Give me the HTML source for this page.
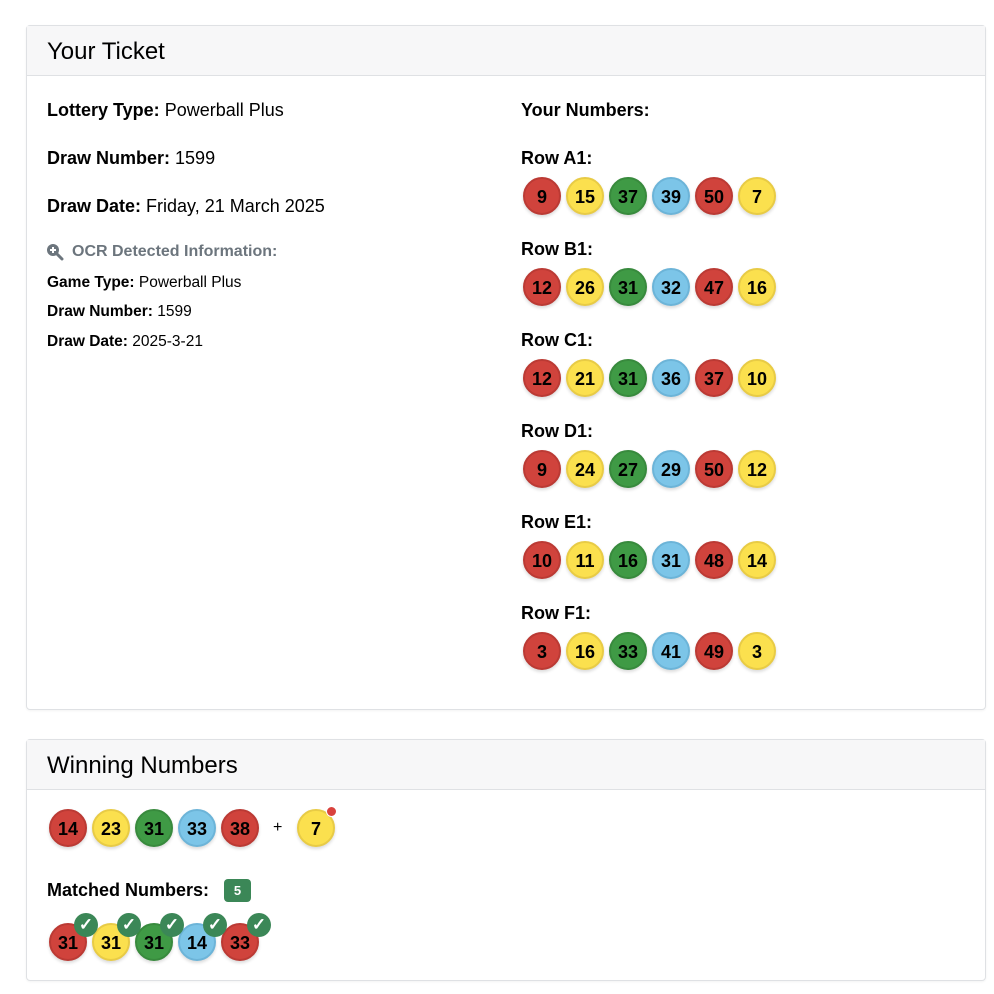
<!DOCTYPE html>
<html><head><meta charset="utf-8"><style>
*{box-sizing:border-box;margin:0;padding:0}
body{width:994px;height:994px;background:#fff;font-family:"Liberation Sans",sans-serif;color:#000;position:relative;overflow:hidden}
.card{position:absolute;left:26px;width:960px;border:1px solid #dfe1e4;border-radius:4px;box-shadow:0 1px 2px rgba(0,0,0,.05)}
.hd{height:50px;background:#f7f7f8;border-bottom:1px solid #dfe1e4;padding-left:20px;font-size:24px;line-height:52px}
.t{position:absolute;white-space:nowrap}
.lbl{font-size:18px}
.sm{font-size:15.5px}
.ball{position:absolute;width:38px;height:38px;border-radius:50%;text-align:center;line-height:36px;font-weight:bold;font-size:18px;box-shadow:0 2px 3px rgba(0,0,0,.15)}
.r{background:#d0433c;border:2px solid #bb3a34}
.y{background:#fbe04e;border:2px solid #e8cb45}
.g{background:#3f9a45;border:2px solid #388a3d}
.b{background:#7cc5e8;border:2px solid #6cb4d8}
.chk{position:absolute;width:24px;height:24px;border-radius:50%;background:#3b8757;color:#fff;font-size:17px;line-height:24px;text-align:center;font-weight:bold}
</style></head><body>
<div class="card" style="top:25px;height:685px"><div class="hd">Your Ticket</div></div>
<div class="card" style="top:739px;height:242px"><div class="hd">Winning Numbers</div></div>

<div class="t lbl" style="left:47px;top:100px"><b>Lottery Type:</b> Powerball Plus</div>
<div class="t lbl" style="left:47px;top:148px"><b>Draw Number:</b> 1599</div>
<div class="t lbl" style="left:47px;top:196px"><b>Draw Date:</b> Friday, 21 March 2025</div>
<svg class="t" style="left:46px;top:243px" width="18" height="18" viewBox="0 0 18 18"><circle cx="7" cy="7" r="6" fill="#6c757d"/><path d="M11 11l5 5" stroke="#6c757d" stroke-width="3" stroke-linecap="round"/><path d="M7 4v6M4 7h6" stroke="#fff" stroke-width="2"/></svg>
<div class="t sm" style="left:72px;top:243px;color:#6c757d;font-weight:bold;font-size:16px">OCR Detected Information:</div>
<div class="t sm" style="left:47px;top:274px"><b>Game Type:</b> Powerball Plus</div>
<div class="t sm" style="left:47px;top:303px"><b>Draw Number:</b> 1599</div>
<div class="t sm" style="left:47px;top:333px"><b>Draw Date:</b> 2025-3-21</div>

<div class="t lbl" style="left:521px;top:100px"><b>Your Numbers:</b></div>

<div class="t lbl" style="left:521px;top:148px"><b>Row A1:</b></div>
<div class="ball r" style="left:523px;top:177px">9</div><div class="ball y" style="left:566px;top:177px">15</div><div class="ball g" style="left:609px;top:177px">37</div><div class="ball b" style="left:652px;top:177px">39</div><div class="ball r" style="left:695px;top:177px">50</div><div class="ball y" style="left:738px;top:177px">7</div>

<div class="t lbl" style="left:521px;top:239px"><b>Row B1:</b></div>
<div class="ball r" style="left:523px;top:268px">12</div><div class="ball y" style="left:566px;top:268px">26</div><div class="ball g" style="left:609px;top:268px">31</div><div class="ball b" style="left:652px;top:268px">32</div><div class="ball r" style="left:695px;top:268px">47</div><div class="ball y" style="left:738px;top:268px">16</div>

<div class="t lbl" style="left:521px;top:330px"><b>Row C1:</b></div>
<div class="ball r" style="left:523px;top:359px">12</div><div class="ball y" style="left:566px;top:359px">21</div><div class="ball g" style="left:609px;top:359px">31</div><div class="ball b" style="left:652px;top:359px">36</div><div class="ball r" style="left:695px;top:359px">37</div><div class="ball y" style="left:738px;top:359px">10</div>

<div class="t lbl" style="left:521px;top:421px"><b>Row D1:</b></div>
<div class="ball r" style="left:523px;top:450px">9</div><div class="ball y" style="left:566px;top:450px">24</div><div class="ball g" style="left:609px;top:450px">27</div><div class="ball b" style="left:652px;top:450px">29</div><div class="ball r" style="left:695px;top:450px">50</div><div class="ball y" style="left:738px;top:450px">12</div>

<div class="t lbl" style="left:521px;top:512px"><b>Row E1:</b></div>
<div class="ball r" style="left:523px;top:541px">10</div><div class="ball y" style="left:566px;top:541px">11</div><div class="ball g" style="left:609px;top:541px">16</div><div class="ball b" style="left:652px;top:541px">31</div><div class="ball r" style="left:695px;top:541px">48</div><div class="ball y" style="left:738px;top:541px">14</div>

<div class="t lbl" style="left:521px;top:603px"><b>Row F1:</b></div>
<div class="ball r" style="left:523px;top:632px">3</div><div class="ball y" style="left:566px;top:632px">16</div><div class="ball g" style="left:609px;top:632px">33</div><div class="ball b" style="left:652px;top:632px">41</div><div class="ball r" style="left:695px;top:632px">49</div><div class="ball y" style="left:738px;top:632px">3</div>

<div class="ball r" style="left:49px;top:809px">14</div><div class="ball y" style="left:92px;top:809px">23</div><div class="ball g" style="left:135px;top:809px">31</div><div class="ball b" style="left:178px;top:809px">33</div><div class="ball r" style="left:221px;top:809px">38</div>
<div class="t" style="left:273px;top:819px;font-size:16px">+</div>
<div class="ball y" style="left:297px;top:809px">7</div>
<div class="t" style="left:326px;top:806px;width:11px;height:11px;border-radius:50%;background:#d9413d;border:1px solid #fff"></div>

<div class="t lbl" style="left:47px;top:880px"><b>Matched Numbers:</b></div>
<div class="t" style="left:224px;top:879px;width:27px;height:23px;border-radius:4px;background:#3b8757;color:#fff;font-size:13px;font-weight:bold;text-align:center;line-height:23px">5</div>

<div class="ball r" style="left:49px;top:923px">31</div><div class="ball y" style="left:92px;top:923px">31</div><div class="ball g" style="left:135px;top:923px">31</div><div class="ball b" style="left:178px;top:923px">14</div><div class="ball r" style="left:221px;top:923px">33</div>
<div class="chk" style="left:74px;top:913px">✓</div><div class="chk" style="left:117px;top:913px">✓</div><div class="chk" style="left:160px;top:913px">✓</div><div class="chk" style="left:203px;top:913px">✓</div><div class="chk" style="left:247px;top:913px">✓</div>
</body></html>
